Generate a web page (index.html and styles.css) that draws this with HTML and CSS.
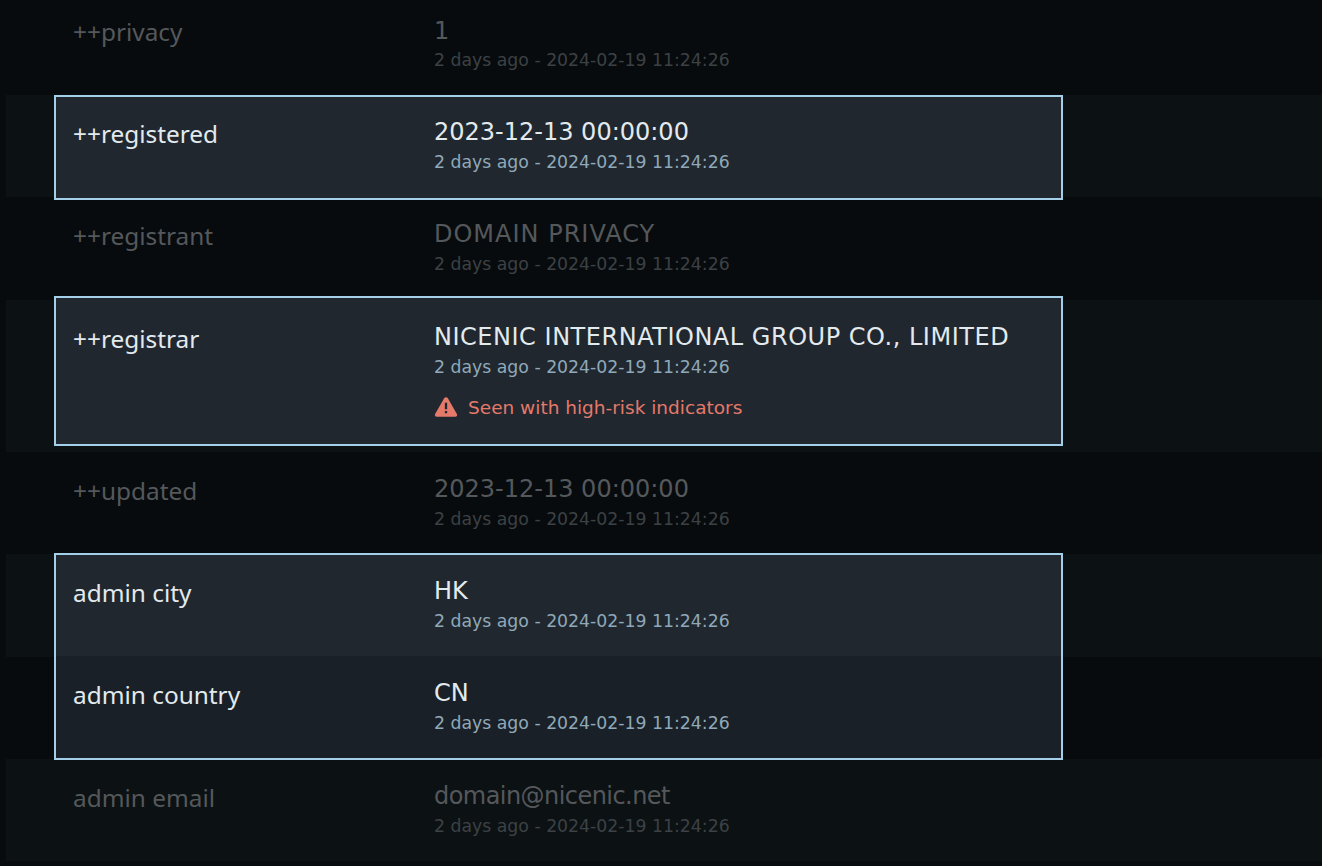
FILE: index.html
```html
<!DOCTYPE html>
<html lang="en">
<head>
<meta charset="utf-8">
<title>Domain details</title>
<link rel="stylesheet" href="styles.css">
</head>
<body>
<main class="list">
  <div class="group"><div class="row first dim"><div class="key">++privacy</div><div class="val"><div class="main">1</div><div class="time">2 days ago - 2024-02-19 11:24:26</div></div></div></div>
  <div class="group alt hi hi-a"><div class="row h102"><div class="key">++registered</div><div class="val"><div class="main">2023-12-13 00:00:00</div><div class="time">2 days ago - 2024-02-19 11:24:26</div></div></div></div>
  <div class="group"><div class="row h103 dim"><div class="key">++registrant</div><div class="val"><div class="main caps-wide">DOMAIN PRIVACY</div><div class="time">2 days ago - 2024-02-19 11:24:26</div></div></div></div>
  <div class="group alt hi hi-b"><div class="row tall"><div class="key">++registrar</div><div class="val"><div class="main caps">NICENIC INTERNATIONAL GROUP CO., LIMITED</div><div class="time">2 days ago - 2024-02-19 11:24:26</div>
    <div class="risk"><svg class="warn" viewBox="0 0 24 22" aria-hidden="true"><path class="tri" d="M12 1.200c.8 0 1.400.4 1.800 1l9.600 16.600c.8 1.400-.2 3-1.800 3H2.400c-1.600 0-2.600-1.600-1.800-3L10.200 2.200c.4-.6 1-1 1.800-1z"/><path class="ex" d="M10.800 7h2.400v7h-2.400zM10.800 15.800h2.400v2.400h-2.400z"/></svg><span>Seen with high-risk indicators</span></div></div></div></div>
  <div class="group"><div class="row h102 dim"><div class="key">++updated</div><div class="val"><div class="main">2023-12-13 00:00:00</div><div class="time">2 days ago - 2024-02-19 11:24:26</div></div></div></div>
  <div class="group pair hi hi-c"><div class="row h102"><div class="key">admin city</div><div class="val"><div class="main">HK</div><div class="time">2 days ago - 2024-02-19 11:24:26</div></div></div>
  <div class="row h103"><div class="key">admin country</div><div class="val"><div class="main">CN</div><div class="time">2 days ago - 2024-02-19 11:24:26</div></div></div></div>
  <div class="group alt"><div class="row dim"><div class="key">admin email</div><div class="val"><div class="main mail">domain@nicenic.net</div><div class="time">2 days ago - 2024-02-19 11:24:26</div></div></div></div>
</main>
</body>
</html>
```
FILE: styles.css
```css
html, body { margin: 0; height: 100%; background: #070b0e; overflow: hidden; }
body { font-family: "Noto Sans", sans-serif; }
.list { display: flex; flex-direction: column; padding-left: 6px; }
.group { position: relative; }
.group.alt { background: #0c1114; }
.group.pair { background: linear-gradient(#0c1114 0, #0c1114 103px, #070b0e 103px); }
.group.hi { z-index: 1; }
.row { position: relative; z-index: 1; display: flex; height: 102.500px; padding-left: 67px; box-sizing: border-box; padding-top: 22px; }
.row.first { height: 94.500px; padding-top: 15px; }
.row.h102 { height: 102px; }
.row.h103 { height: 103px; }
.row.tall { height: 152px; }
.key { width: 361px; flex: none; font-size: 24.400px; line-height: 30px; padding-top: 2px; color: #e3eaee; }
.val { padding-top: .5px; }
.main { font-family: "DejaVu Sans", sans-serif; font-size: 24px; line-height: 30px; color: #e3eaee; }
.main.caps { letter-spacing: .52px; }
.main.caps-wide { letter-spacing: 1px; }
.main.mail { letter-spacing: -.55px; }
.time { font-family: "DejaVu Sans", sans-serif; font-size: 17.300px; line-height: 24px; color: #8fa9b8; margin-top: 2.800px; }
.dim .key, .dim .main { color: #55585b; }
.dim .time { color: #3c4144; }
.hi::before { content: ""; position: absolute; z-index: 0; left: 47.500px; width: 1009px; box-sizing: border-box; border: 2px solid #a3cfe8; background: #20272f; }
.hi-a::before { top: .5px; bottom: -3.500px; }
.hi-b::before { top: -3.500px; bottom: 5.500px; }
.hi-c::before { top: -.5px; bottom: -1.500px; background: linear-gradient(#20272f 0, #20272f 101.500px, #1a2027 101.500px); }
.risk { display: flex; align-items: center; gap: 10px; margin-top: 16.700px; font-family: "DejaVu Sans", sans-serif; font-size: 18.500px; line-height: 26px; color: #e5796a; }
.warn { width: 24px; height: 21px; flex: none; margin-top: -3px; }
.tri { fill: #e5796a; }
.ex { fill: #20272f; }
```
